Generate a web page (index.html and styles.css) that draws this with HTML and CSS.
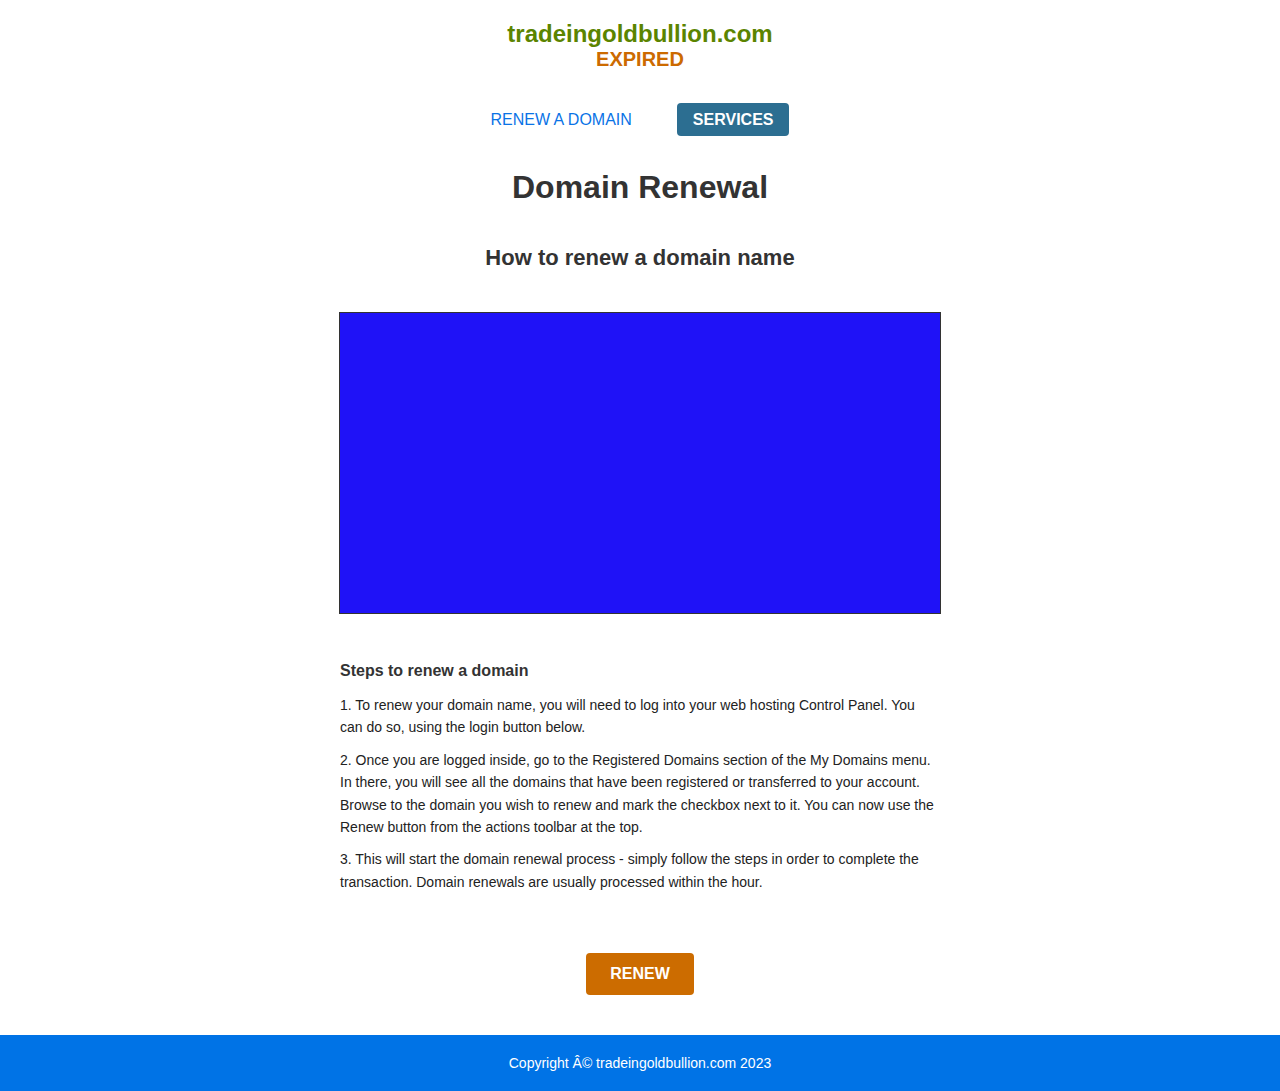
FILE: index.html
```html
<!DOCTYPE html>
<html>
<head>
<meta charset="utf-8">
<title>tradeingoldbullion.com</title>
<link rel="stylesheet" href="styles.css">
</head>
<body>
<header class="header">
  <div class="logo">
    <div class="domain">tradeingoldbullion.com</div>
    <div class="status">EXPIRED</div>
  </div>
  <nav class="nav">
    <a class="nav-link" href="#">RENEW A DOMAIN</a>
    <a class="nav-btn" href="#">SERVICES</a>
  </nav>
</header>
<main class="main">
  <h1 class="title">Domain Renewal</h1>
  <h2 class="subtitle">How to renew a domain name</h2>
  <div class="video"></div>
  <section class="steps">
    <h3 class="steps-title">Steps to renew a domain</h3>
    <p>1. To renew your domain name, you will need to log into your web hosting Control Panel. You can do so, using the login button below.</p>
    <p>2. Once you are logged inside, go to the Registered Domains section of the My Domains menu. In there, you will see all the domains that have been registered or transferred to your account. Browse to the domain you wish to renew and mark the checkbox next to it. You can now use the Renew button from the actions toolbar at the top.</p>
    <p>3. This will start the domain renewal process - simply follow the steps in order to complete the transaction. Domain renewals are usually processed within the hour.</p>
  </section>
  <div class="cta">
    <a class="renew-btn" href="#">RENEW</a>
  </div>
</main>
<footer class="footer">Copyright Â© tradeingoldbullion.com 2023</footer>
</body>
</html>
```
FILE: styles.css
```css
html, body {
  margin: 0;
  padding: 0;
}
body {
  font-family: "Liberation Sans", Arial, sans-serif;
  color: #333;
  background: #fff;
}
a { text-decoration: none; }
.header {
  display: flex;
  flex-direction: column;
  align-items: center;
  padding-top: 20px;
}
.logo {
  text-align: center;
  font-weight: bold;
}
.domain {
  color: #5b8400;
  font-size: 24px;
  line-height: 28px;
}
.status {
  color: #cc6a00;
  font-size: 20px;
  line-height: 22px;
}
.nav {
  display: flex;
  align-items: center;
  gap: 45px;
  margin-top: 33px;
}
.nav-link {
  color: #0a73e6;
  font-size: 16px;
  padding: 7px 0;
}
.nav-btn {
  background: #2c6e91;
  color: #fff;
  font-weight: bold;
  font-size: 16px;
  line-height: 18px;
  padding: 8px 16px 7px;
  border-radius: 4px;
}
.main {
  width: 602px;
  margin: 0 auto;
  display: flex;
  flex-direction: column;
  align-items: center;
}
.title {
  font-size: 32px;
  line-height: 38px;
  margin: 32px 0 0;
  font-weight: bold;
}
.subtitle {
  font-size: 22px;
  line-height: 26px;
  margin: 39px 0 0;
  font-weight: bold;
}
.video {
  width: 600px;
  height: 300px;
  background: #1f12f7;
  border: 1px solid #333;
  margin-top: 41px;
}
.steps {
  align-self: stretch;
  padding: 0 1px;
  margin-top: 47px;
}
.steps-title {
  font-size: 16px;
  line-height: 20px;
  margin: 0 0 13px;
}
.steps p {
  font-size: 14px;
  line-height: 22.4px;
  margin: 0 0 10px;
  color: #222;
}
.cta {
  margin-top: 50px;
  margin-bottom: 40px;
}
.renew-btn {
  display: block;
  width: 108px;
  height: 42px;
  line-height: 42px;
  text-align: center;
  background: #cc6c00;
  color: #fff;
  font-weight: bold;
  font-size: 16px;
  border-radius: 4px;
}
.footer {
  background: #0073e6;
  color: #fff;
  font-size: 14px;
  text-align: center;
  height: 56px;
  line-height: 56px;
}
```
